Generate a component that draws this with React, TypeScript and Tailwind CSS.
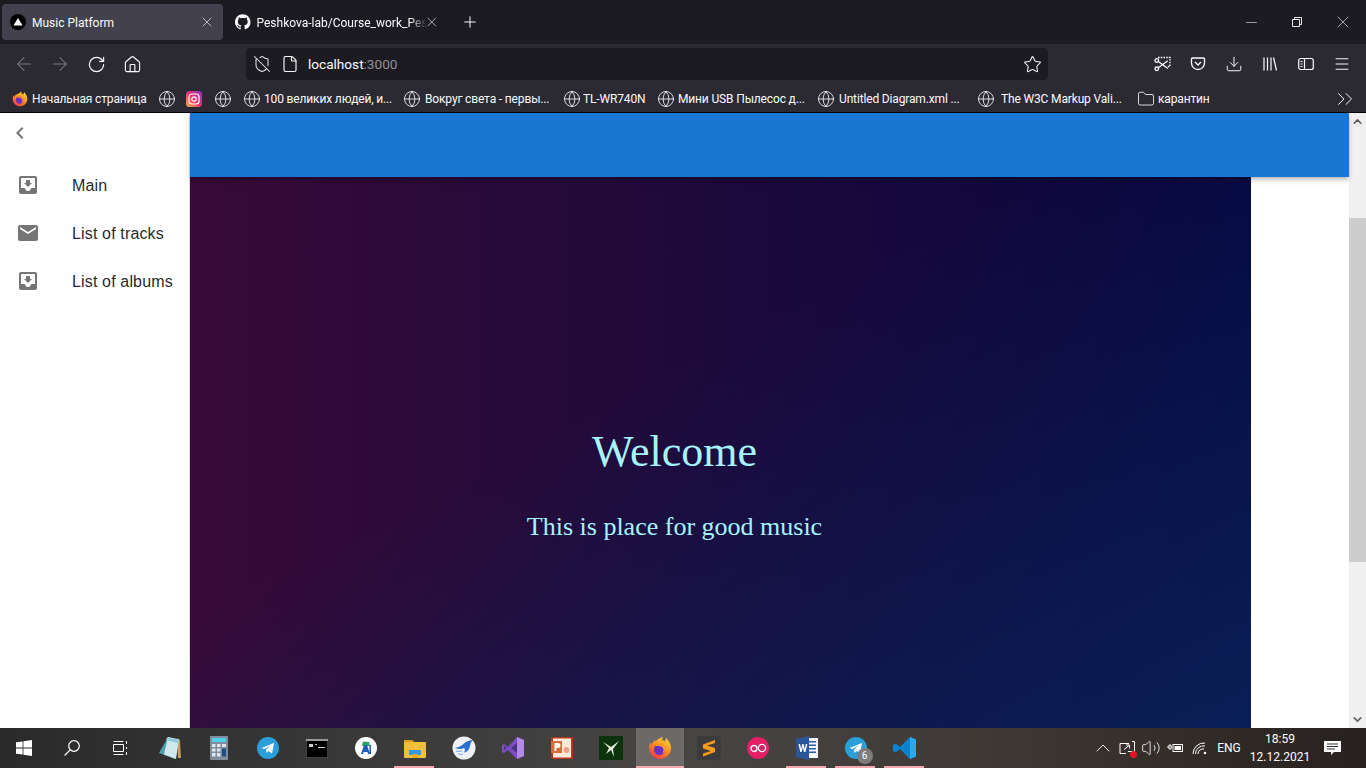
import type { ReactNode } from 'react';
import {
  ArrowLeft,
  ArrowRight,
  ChevronUp,
  ChevronsRight,
  Download,
  File,
  Folder,
  Globe,
  House,
  Menu,
  Minus,
  Plus,
  RotateCw,
  ShieldOff,
  Star,
  Volume2,
  X,
} from 'lucide-react';

const bookmarks = [
  { gap: 'ml-[12px]', text: '', w: '' },
  { gap: 'ml-[11px]', text: '100 великих людей, и...', w: 'ml-[3px] w-[127px]' },
  { gap: 'ml-[12px]', text: 'Вокруг света - первы...', w: 'ml-[4px] w-[125px]' },
  { gap: 'ml-[13px]', text: 'TL-WR740N', w: 'ml-[2px] w-[62px]' },
  { gap: 'ml-[12px]', text: 'Мини USB Пылесос д...', w: 'ml-[3px] w-[127px]' },
  { gap: 'ml-[12px]', text: 'Untitled Diagram.xml ...', w: 'ml-[4px] w-[125px]' },
  { gap: 'ml-[13px]', text: 'The W3C Markup Vali...', w: 'ml-[6px] w-[121px]' },
];

function Mui({ d, className }: { d: string; className?: string }) {
  return (
    <svg viewBox="0 0 24 24" className={className} fill="#757575">
      <path d={d} />
    </svg>
  );
}

const inboxPath =
  'M19 3H4.99c-1.11 0-1.98.89-1.98 2L3 19c0 1.1.88 2 1.99 2H19c1.1 0 2-.9 2-2V5c0-1.11-.9-2-2-2zm0 12h-4c0 1.66-1.35 3-3 3s-3-1.34-3-3H4.99V5H19v10zm-3-5h-2V7h-4v3H8l4 4 4-4z';
const mailPath =
  'M20 4H4c-1.1 0-1.99.9-1.99 2L2 18c0 1.1.9 2 2 2h16c1.1 0 2-.9 2-2V6c0-1.1-.9-2-2-2zm0 4l-8 5-8-5V6l8 5 8-5v2z';

function FirefoxLogo({ size = 16 }: { size?: number }) {
  return (
    <svg width={size} height={size} viewBox="0 0 24 24">
      <defs>
        <linearGradient id="fx" x1="0.8" y1="0" x2="0.2" y2="1">
          <stop offset="0" stopColor="#ffd43a" />
          <stop offset="0.5" stopColor="#ff8a1f" />
          <stop offset="1" stopColor="#f0304f" />
        </linearGradient>
      </defs>
      <path
        d="M12 23C5.9 23 1 18 1 12c0-2 .5-4 1.5-5.5.2 1 .7 1.7 1.2 2.2C4.5 6 7 4.5 8.8 4.6 10 2.800 13 1.500 15 1c-.8 1.400-1 2.500-.6 3.300 1 .3 2 .6 3 1.200C17 3.500 18 2.500 18.500 2c1 2 4.500 4.800 4.500 10 0 6-4.900 11-11 11z"
        fill="url(#fx)"
      />
      <circle cx="11.500" cy="13.500" r="5.500" fill="#6a2fc4" />
      <path d="M7 10c2-2.500 7-3 10 .5 1 2.500 0 6-3 7 2-2 2-5 0-6.500C12 9.500 9 10 7 10z" fill="#ff9a2e" />
    </svg>
  );
}

function TaskCell({ children, active, mark }: { children: ReactNode; active?: boolean; mark?: boolean }) {
  return (
    <div className={`relative flex h-10 items-center justify-center ${active ? 'ml-[1px] w-[48px] bg-[#6b6a69]' : 'w-[49px]'}`}>
      {children}
      {mark && <div className="absolute bottom-0 left-[4px] right-[5px] h-[2px] bg-[#f4a9b0]" />}
      {active && <div className="absolute bottom-0 left-0 right-0 h-[2px] bg-[#f4a9b0]" />}
    </div>
  );
}

function NavSlot({ children }: { children: ReactNode }) {
  return <div className="flex h-[32px] w-[36px] items-center justify-center">{children}</div>;
}

export default function App() {
  return (
    <div className="flex h-[768px] w-[1366px] flex-col overflow-hidden bg-white font-['Roboto',sans-serif]">
      {/* Tab strip */}
      <div className="flex h-[44px] items-center bg-[#1c1b22] text-[12px] text-[#fbfbfe]">
        <div className="ml-[2px] flex h-[36px] w-[221px] items-center rounded-[4px] bg-[#42414d] pl-[8px] pr-[8px]">
          <svg width="16" height="16" viewBox="0 0 16 16">
            <circle cx="8" cy="8" r="8" fill="#000" />
            <path d="M8 4l4.500 7.500h-9z" fill="#fff" />
          </svg>
          <span className="ml-[6px] flex-1 pt-[2px]">Music Platform</span>
          <X size={16} strokeWidth={1.200} className="text-[#d6d6da]" />
        </div>
        <div className="ml-[12px] flex w-[205px] items-center">
          <svg width="16" height="16" viewBox="0 0 16 16" fill="#fbfbfe">
            <path d="M8 0C3.580 0 0 3.580 0 8c0 3.540 2.290 6.530 5.470 7.590.4.070.55-.17.55-.38 0-.19-.01-.82-.01-1.490-2.010.37-2.530-.49-2.690-.94-.09-.23-.48-.94-.82-1.130-.28-.15-.68-.52-.01-.53.63-.01 1.080.58 1.230.82.720 1.210 1.870.87 2.330.66.070-.52.280-.87.510-1.070-1.780-.2-3.640-.89-3.640-3.950 0-.87.310-1.590.820-2.150-.08-.2-.36-1.020.08-2.120 0 0 .67-.21 2.200.82.640-.18 1.320-.27 2-.27s1.360.09 2 .27c1.530-1.040 2.200-.82 2.200-.82.440 1.100.16 1.920.08 2.120.51.56.82 1.270.82 2.150 0 3.070-1.870 3.750-3.650 3.950.29.250.54.730.54 1.480 0 1.070-.01 1.930-.01 2.200 0 .21.150.46.550.38A8.010 8.010 0 0 0 16 8c0-4.420-3.580-8-8-8z" />
          </svg>
          <span className="ml-[6px] w-[171px] whitespace-nowrap pt-[2px] [mask-image:linear-gradient(to_right,#000_90%,transparent)]">
            Peshkova-lab/Course_work_Pes
          </span>
          <X size={16} strokeWidth={1.200} className="ml-[-3px] text-[#d6d6da]" />
        </div>
        <Plus size={18} strokeWidth={1.300} className="ml-[21px]" />
        <div className="ml-auto flex items-center text-[#e8e8ea]">
          <div className="flex w-[46px] justify-center">
            <Minus size={17} strokeWidth={0.900} />
          </div>
          <div className="flex w-[46px] justify-center">
            <svg width="12" height="12" viewBox="0 0 12 12" fill="none" stroke="currentColor">
              <path d="M1.500 3.500h7v7h-7z M3.500 3.500v-2h7v7h-2" />
            </svg>
          </div>
          <div className="flex w-[46px] justify-center">
            <X size={20} strokeWidth={0.800} />
          </div>
        </div>
      </div>

      {/* Navigation bar */}
      <div className="flex h-[36px] items-start bg-[#2b2a33] pt-[4px] text-[#fbfbfe]">
        <div className="flex h-[32px] w-[246px] shrink-0 items-center pl-[6px]">
          <NavSlot>
            <ArrowLeft size={22} strokeWidth={1.100} className="text-[#7b7a82]" />
          </NavSlot>
          <NavSlot>
            <ArrowRight size={22} strokeWidth={1.100} className="text-[#7b7a82]" />
          </NavSlot>
          <NavSlot>
            <RotateCw size={19} strokeWidth={1.500} />
          </NavSlot>
          <NavSlot>
            <House size={19} strokeWidth={1.400} />
          </NavSlot>
        </div>
        <div className="flex h-[32px] w-[802px] items-center rounded-[4px] bg-[#1c1b22] text-[13.600px]">
          <ShieldOff size={18} strokeWidth={1.400} className="ml-[7px] text-[#e6e6ea]" />
          <File size={18} strokeWidth={1.500} className="ml-[10px]" />
          <span className="ml-[9px] pt-[1px]">
            localhost<span className="text-[#8f8f9d]">:3000</span>
          </span>
          <Star size={19} strokeWidth={1.300} className="ml-auto mr-[6px]" />
        </div>
        <div className="flex h-[32px] flex-1 items-center pl-[96px]">
          <NavSlot>
            <svg width="17" height="16" viewBox="0 0 17 16" fill="none" stroke="currentColor" strokeWidth="1.300">
              <path d="M4 1.500h12v9h-3" strokeDasharray="1.600 1.100" />
              <circle cx="2.800" cy="4.500" r="1.800" />
              <circle cx="2.800" cy="12.800" r="1.800" />
              <path d="M4.300 5.500l9.500 7M4.300 11.800l9.500-7" />
            </svg>
          </NavSlot>
          <NavSlot>
            <svg width="16" height="16" viewBox="0 0 16 16" fill="none" stroke="currentColor" strokeWidth="1.300">
              <path d="M2.500 2h11a1 1 0 0 1 1 1v4a6.500 6.500 0 0 1-13 0V3a1 1 0 0 1 1-1z" />
              <path d="M5 6l3 3 3-3" />
            </svg>
          </NavSlot>
          <NavSlot>
            <Download size={18} strokeWidth={1.300} />
          </NavSlot>
          <NavSlot>
            <svg width="16" height="16" viewBox="0 0 16 16" fill="none" stroke="currentColor" strokeWidth="1.200">
              <path d="M2 1.500v13M5.500 1.500v13M9 1.500v13M11.500 1.500l3 13" />
            </svg>
          </NavSlot>
          <NavSlot>
            <svg width="16" height="16" viewBox="0 0 16 16" fill="none" stroke="currentColor" strokeWidth="1.200">
              <rect x="0.700" y="2.500" width="14.600" height="11" rx="2" />
              <path d="M6.500 2.500v11M2.500 5.500h2M2.500 8h2M2.500 10.500h2" />
            </svg>
          </NavSlot>
          <NavSlot>
            <Menu size={18} strokeWidth={1.300} />
          </NavSlot>
        </div>
      </div>

      {/* Bookmarks toolbar */}
      <div className="flex h-[33px] items-center border-b border-black bg-[#2b2a33] pl-[12px] pt-[5px] text-[12px] tracking-[-0.150px] text-[#fbfbfe]">
        <FirefoxLogo />
        <span className="ml-[4px] w-[114px] whitespace-nowrap">Начальная страница</span>
        <Globe size={18} strokeWidth={1.100} className="ml-[12px]" />
        <svg width="16" height="16" viewBox="0 0 16 16" className="ml-[10px]">
          <defs>
            <linearGradient id="ig" x1="0" y1="1" x2="1" y2="0">
              <stop offset="0" stopColor="#fdb33b" />
              <stop offset="0.5" stopColor="#e6306f" />
              <stop offset="1" stopColor="#8a3ac8" />
            </linearGradient>
          </defs>
          <rect width="16" height="16" rx="3.500" fill="url(#ig)" />
          <rect x="3" y="3" width="10" height="10" rx="3" fill="none" stroke="#fff" strokeWidth="1.200" />
          <circle cx="8" cy="8" r="2.200" fill="none" stroke="#fff" strokeWidth="1.200" />
        </svg>
        {bookmarks.map((b, i) => (
          <div key={i} className={`flex items-center ${b.gap}`}>
            <Globe size={18} strokeWidth={1.100} />
            {b.text && <span className={`${b.w} whitespace-nowrap`}>{b.text}</span>}
          </div>
        ))}
        <Folder size={18} strokeWidth={1.100} className="ml-[15px]" />
        <span className="ml-[3px] whitespace-nowrap">карантин</span>
        <ChevronsRight size={26} strokeWidth={0.900} className="ml-auto mr-[8px]" />
      </div>

      {/* Page */}
      <div className="flex h-[615px] shrink-0">
        <aside className="w-[190px] shrink-0 border-r border-[#e0e0e0] font-['Liberation_Sans',sans-serif] text-[16px] tracking-[0.150px] text-[#000000de]">
          <div className="flex h-[40px] items-center pl-[8px]">
            <Mui d="M15.41 7.41L14 6l-6 6 6 6 1.41-1.41L10.83 12z" className="h-6 w-6" />
          </div>
          <div className="pt-[8px]">
            {[
              { label: 'Main', d: inboxPath },
              { label: 'List of tracks', d: mailPath },
              { label: 'List of albums', d: inboxPath },
            ].map((item) => (
              <div key={item.label} className="flex h-[48px] items-center pl-[16px]">
                <Mui d={item.d} className="h-6 w-6" />
                <span className="ml-[32px] whitespace-nowrap pt-[2px]">{item.label}</span>
              </div>
            ))}
          </div>
        </aside>

        <div className="flex min-w-0 flex-1 flex-col">
          <div className="relative z-10 h-[64px] shrink-0 bg-[#1976d2] shadow-[0_2px_4px_-1px_rgba(0,0,0,0.2),0_4px_5px_0_rgba(0,0,0,0.14)]" />
          <div className="flex min-h-0 flex-1">
            <main className="flex w-[1061px] flex-col items-center bg-[linear-gradient(to_bottom_right,transparent_40%,#0a2258e6),linear-gradient(to_right,#380a38,#230a3a_38%,#06063f)] pr-[92px] pt-[245px] font-['Liberation_Serif',serif] text-[#a6f4ff]">
              <h1 className="text-[44px] leading-[60px]">Welcome</h1>
              <p className="mt-[30px] text-[26px] leading-[30px]">This is place for good music</p>
            </main>
          </div>
        </div>

        {/* Scrollbar */}
        <div className="flex w-[17px] shrink-0 flex-col items-center bg-[#f0f0f0] text-[#606060]">
          <ChevronUp size={13} strokeWidth={3} className="mt-[2px] shrink-0" />
          <div className="mt-[90px] h-[344px] w-full shrink-0 bg-[#cdcdcd]" />
          <ChevronUp size={13} strokeWidth={3} className="mb-[2px] mt-auto shrink-0 rotate-180" />
        </div>
      </div>

      {/* Taskbar */}
      <div className="flex h-[40px] shrink-0 items-center bg-[linear-gradient(to_right,#2b2a2a,#474645_50%,#3d3733_75%,#27211f)] text-[12px] text-white">
        <div className="flex w-[48px] justify-center">
          <svg width="16" height="16" viewBox="0 0 16 16" fill="#fff">
            <path d="M0 2.300l6.600-.9v6.200H0zM7.400 1.300L16 0v7.600H7.400zM0 8.400h6.600v6.200L0 13.700zM7.400 8.400H16V16l-8.600-1.300z" />
          </svg>
        </div>
        <div className="flex w-[48px] justify-center">
          <svg width="16" height="16" viewBox="0 0 16 16" fill="none" stroke="#fff" strokeWidth="1.200">
            <circle cx="10" cy="6" r="5.300" />
            <path d="M6.200 9.800L.6 15.500" />
          </svg>
        </div>
        <div className="flex w-[49px] justify-center">
          <svg width="16" height="16" viewBox="0 0 16 16" fill="none" stroke="#fff" strokeWidth="1">
            <path d="M0.500 4.500h10v7h-10zM0.500 1.500h10M0.500 14.500h10M13.500 1v3M13.500 7v2M13.500 12v3" />
          </svg>
        </div>
        <TaskCell>
          <svg width="22" height="24" viewBox="0 0 22 24">
            <path d="M18 2l3 2 1 18-3 0z" fill="#c99a5a" />
            <path d="M9 1l11 2.500L16 23 0 17z" fill="#4f9fb0" />
            <path d="M9 1l11 2.500L17 23 5 18.500z" fill="#cfe8ea" />
            <path d="M8 1.500l12 2.500-1 3-12-3z" fill="#8ccad6" />
          </svg>
        </TaskCell>
        <TaskCell>
          <svg width="18" height="24" viewBox="0 0 18 24">
            <rect width="18" height="24" rx="1" fill="#7f8d9c" />
            <rect x="2" y="2" width="14" height="4" fill="#4fd0e8" />
            <path d="M2 8h3.500v3H2zM7 8h3.500v3H7zM2 12.500h3.500v3H2zM7 12.500h3.500v3H7zM2 17h3.500v3.500H2zM7 17h3.500v3.500H7zM12 8h4v3h-4z" fill="#dfe5ea" />
            <path d="M12 12.500h4v8h-4z" fill="#1d4f8f" />
          </svg>
        </TaskCell>
        <TaskCell>
          <svg width="22" height="22" viewBox="0 0 22 22">
            <circle cx="11" cy="11" r="11" fill="#2b9fd9" />
            <path d="M4.500 11L17 6l-2 10.500-3.500-2.500-2 2-.5-3.500 5-4.500-6.500 4z" fill="#fff" />
          </svg>
        </TaskCell>
        <TaskCell>
          <svg width="22" height="19" viewBox="0 0 22 19">
            <rect width="22" height="19" fill="#000" stroke="#7a7a7a" />
            <rect width="22" height="2" fill="#9a9a9a" />
            <path d="M3 5h4v3H3zM9 5h2v1H9zM12 8h7v1h-7z" fill="#ccc" />
          </svg>
        </TaskCell>
        <TaskCell>
          <svg width="22" height="22" viewBox="0 0 22 22">
            <circle cx="11" cy="11" r="11" fill="#fff" />
            <path d="M8 4.500l6 .5 1 4H7z" fill="#27a060" />
            <path d="M6 17l3-9h3l3 9h-2l-.6-2H8.600L8 17zM14.500 8h1.500v9h-1.500z" fill="#1f5fb8" />
          </svg>
        </TaskCell>
        <TaskCell mark>
          <svg width="22" height="19" viewBox="0 0 22 19">
            <path d="M0 2a1 1 0 0 1 1-1h7l2 2h11a1 1 0 0 1 1 1v14a1 1 0 0 1-1 1H1a1 1 0 0 1-1-1z" fill="#f2c038" />
            <path d="M0 2a1 1 0 0 1 1-1h7l2 2H0z" fill="#d99a1e" />
            <path d="M5 11h12v5H5z" fill="#2f9ae0" />
            <path d="M8.500 15h5v4h-5z" fill="#f5a623" />
          </svg>
        </TaskCell>
        <TaskCell>
          <svg width="24" height="24" viewBox="0 0 24 24">
            <circle cx="12" cy="12" r="11.500" fill="#eef0f4" />
            <path d="M3 12c4-.5 7-2.500 9-4.500C14 5.500 18 4 21 4c-2 1.500-2.500 3.500-3 6-.5 3-2.500 6-6 6.500 1.500-2 1-3.500 0-4.500-2 1-5 1.500-9 0z" fill="#2b6fd0" />
            <path d="M4 15c2 .5 4 .5 6 0M6 18c2 .5 3 .5 5 0" stroke="#6fa5e6" fill="none" />
          </svg>
        </TaskCell>
        <TaskCell>
          <svg width="24" height="24" viewBox="0 0 24 24">
            <path d="M16 1l7 3v16l-7 3-9-9-4 3-2-1V9l2-1 4 3z" fill="#7d4cc4" />
            <path d="M16 1l7 3v16l-7 3z" fill="#b388e8" />
            <path d="M16 7v10l-6-5z" fill="#4a3080" />
            <path d="M3 9.500v5l2.500-2.500z" fill="#4a3080" />
          </svg>
        </TaskCell>
        <TaskCell>
          <svg width="22" height="22" viewBox="0 0 22 22">
            <rect width="22" height="22" fill="#b8321c" />
            <rect x="2" y="1.500" width="18" height="19" fill="#fbe9dc" />
            <rect x="0" y="4" width="11" height="12" fill="#e06a3a" />
            <path d="M3.500 6h3.500a2.500 2.500 0 0 1 0 5H5.300v3H3.500z" fill="#fff" />
            <circle cx="15.500" cy="13" r="3" fill="#e9a08a" />
          </svg>
        </TaskCell>
        <TaskCell>
          <svg width="24" height="24" viewBox="0 0 24 24">
            <rect width="24" height="24" fill="#0c330c" />
            <path d="M4 6l8 5 8-6-6 8 1 8-3-7-5 4 3-6z" fill="#e8f0e0" />
          </svg>
        </TaskCell>
        <TaskCell active>
          <FirefoxLogo size={24} />
        </TaskCell>
        <TaskCell>
          <svg width="24" height="24" viewBox="0 0 24 24">
            <rect width="24" height="24" rx="2" fill="#3b3b3b" />
            <path d="M18 4L6 8.500v4L14 15l-8 2.500v3L18 16v-4l-8-2.500L18 7z" fill="#f89a1c" />
          </svg>
        </TaskCell>
        <TaskCell>
          <svg width="22" height="22" viewBox="0 0 22 22">
            <circle cx="11" cy="11" r="11" fill="#e41f65" />
            <circle cx="7" cy="11.500" r="3" fill="none" stroke="#fff" strokeWidth="1.300" />
            <circle cx="15" cy="11" r="3.600" fill="none" stroke="#fff" strokeWidth="1.300" />
          </svg>
        </TaskCell>
        <TaskCell mark>
          <svg width="22" height="24" viewBox="0 0 22 24">
            <rect x="7" y="2" width="15" height="20" fill="#f4f6fa" />
            <path d="M13 5h7v1.500h-7zM13 8.500h7V10h-7zM13 12h7v1.500h-7zM13 15.500h7V17h-7z" fill="#2b5ea8" />
            <path d="M0 3l13-3v24L0 21z" fill="#2a5699" />
            <path d="M2.500 8h1.600l1 5 1.200-5h1.300l1.200 5 1-5h1.500l-1.800 8H8l-1.200-4.800L5.600 16H4.300z" fill="#fff" />
          </svg>
        </TaskCell>
        <TaskCell mark>
          <div className="relative h-[22px] w-[22px]">
            <svg width="22" height="22" viewBox="0 0 22 22">
              <circle cx="11" cy="11" r="11" fill="#2b9fd9" />
              <path d="M4.500 11L17 6l-2 10.500-3.500-2.500-2 2-.5-3.500 5-4.500-6.500 4z" fill="#fff" />
            </svg>
            <div className="absolute bottom-[-5px] right-[-6px] flex h-[16px] w-[16px] items-center justify-center rounded-full bg-[#7d7d7d] text-[10px] leading-none">
              6
            </div>
          </div>
        </TaskCell>
        <TaskCell mark>
          <svg width="24" height="24" viewBox="0 0 24 24">
            <path d="M17 1l6 2.500v17L17 23 7 13l-4.500 3.500L0 15V9l2.500-1.500L7 11z" fill="#0a84d0" />
            <path d="M17 1l6 2.500v17L17 23z" fill="#2ba7ee" />
          </svg>
        </TaskCell>

        {/* Tray */}
        <div className="ml-auto flex h-full items-center pr-[14px]">
          <div className="flex w-[24px] justify-center">
            <ChevronUp size={24} strokeWidth={0.900} />
          </div>
          <div className="flex w-[24px] justify-center">
            <div className="relative h-[16px] w-[16px]">
              <svg width="16" height="16" viewBox="0 0 16 16" fill="none" stroke="#fff">
                <path d="M13 1.500h2.500v10H9M7 13.500H1V3.500h9M5 9.500l5-4M7 5h3.500v3.500" />
              </svg>
              <div className="absolute bottom-[-2px] right-[-2px] h-[7px] w-[7px] rounded-full bg-[#e81123]" />
            </div>
          </div>
          <div className="flex w-[24px] justify-center">
            <Volume2 size={20} strokeWidth={1} />
          </div>
          <div className="flex w-[24px] justify-center">
            <svg width="16" height="12" viewBox="0 0 16 12" fill="none" stroke="#fff">
              <path d="M0 5h2M2 3h2v4H2zM4 5h1" />
              <rect x="6" y="2.500" width="9.500" height="7" />
              <rect x="7.500" y="4" width="6.500" height="4" fill="#fff" stroke="none" />
            </svg>
          </div>
          <div className="ml-[1px] flex w-[24px] justify-center">
            <svg width="16" height="14" viewBox="0 0 16 14" fill="none" stroke="#fff">
              <path d="M1 13A11 11 0 0 1 13 2M3.500 13A8 8 0 0 1 13 5M6 13a5 5 0 0 1 6-5" />
              <circle cx="13" cy="12" r="1.300" fill="#fff" stroke="none" />
            </svg>
          </div>
          <div className="w-[34px] text-center">ENG</div>
          <div className="w-[68px] text-center leading-[18px]">
            <div>18:59</div>
            <div>12.12.2021</div>
          </div>
          <div className="flex w-[38px] justify-center">
            <svg width="18" height="16" viewBox="0 0 18 16" fill="#fff">
              <path d="M0 1h17v11h-7l-3 3v-3H0z" />
              <path d="M3 4h11M3 6.500h11M3 9h8" stroke="#333" />
            </svg>
          </div>
        </div>
      </div>
    </div>
  );
}
